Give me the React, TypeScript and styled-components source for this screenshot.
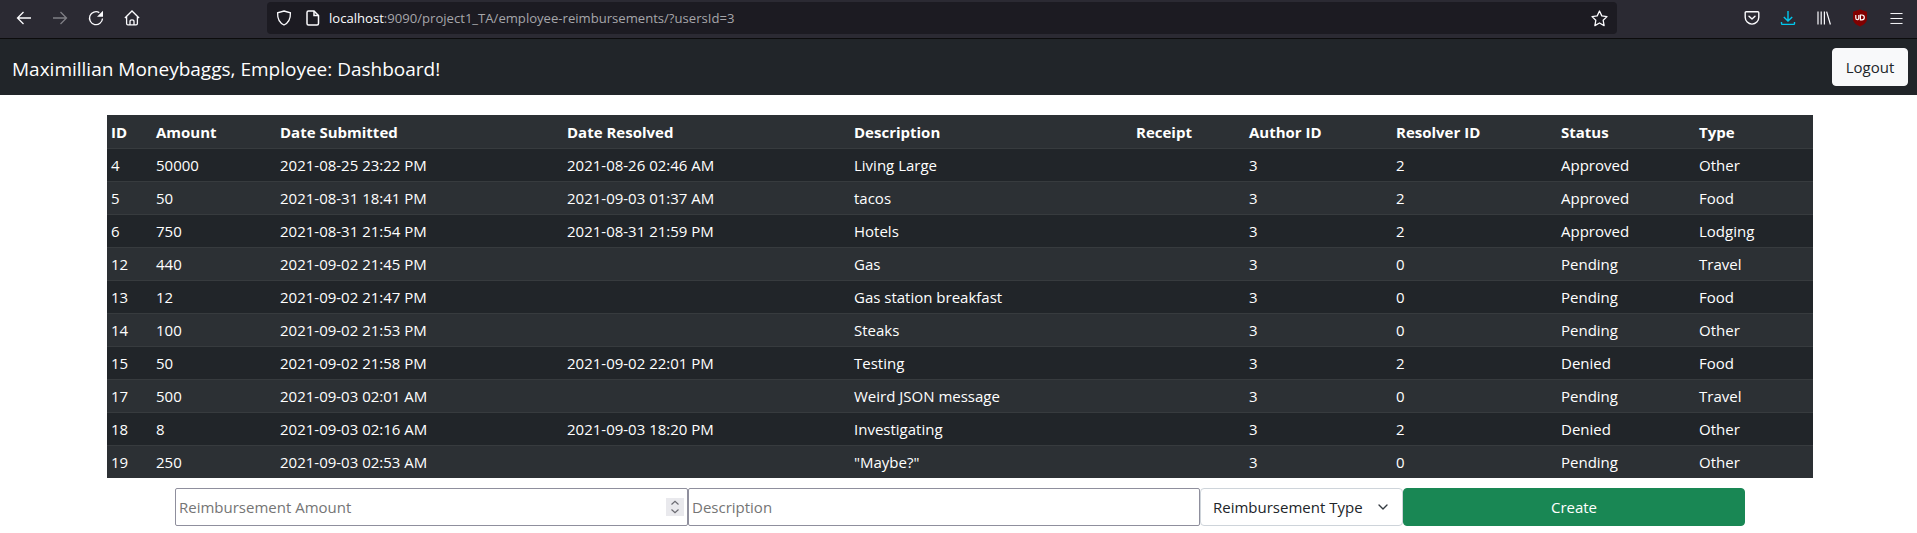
import React from 'react';
import styled, { createGlobalStyle } from 'styled-components';
import { ChevronDown, Menu } from 'lucide-react';

const FONT = `"Open Sans", "Noto Sans", "Liberation Sans", sans-serif`;

const GlobalStyle = createGlobalStyle`
 html, body {
  margin: 0;
  padding: 0;
  background: white;
  font-family: ${FONT};
 }
 * { box-sizing: border-box; }
`;

const columns = [
 { label: 'ID', width: 45 },
 { label: 'Amount', width: 124 },
 { label: 'Date Submitted', width: 287 },
 { label: 'Date Resolved', width: 287 },
 { label: 'Description', width: 282 },
 { label: 'Receipt', width: 113 },
 { label: 'Author ID', width: 147 },
 { label: 'Resolver ID', width: 165 },
 { label: 'Status', width: 138 },
 { label: 'Type', width: 118 },
];

const rows = [
 ['4', '50000', '2021-08-25 23:22 PM', '2021-08-26 02:46 AM', 'Living Large', '', '3', '2', 'Approved', 'Other'],
 ['5', '50', '2021-08-31 18:41 PM', '2021-09-03 01:37 AM', 'tacos', '', '3', '2', 'Approved', 'Food'],
 ['6', '750', '2021-08-31 21:54 PM', '2021-08-31 21:59 PM', 'Hotels', '', '3', '2', 'Approved', 'Lodging'],
 ['12', '440', '2021-09-02 21:45 PM', '', 'Gas', '', '3', '0', 'Pending', 'Travel'],
 ['13', '12', '2021-09-02 21:47 PM', '', 'Gas station breakfast', '', '3', '0', 'Pending', 'Food'],
 ['14', '100', '2021-09-02 21:53 PM', '', 'Steaks', '', '3', '0', 'Pending', 'Other'],
 ['15', '50', '2021-09-02 21:58 PM', '2021-09-02 22:01 PM', 'Testing', '', '3', '2', 'Denied', 'Food'],
 ['17', '500', '2021-09-03 02:01 AM', '', 'Weird JSON message', '', '3', '0', 'Pending', 'Travel'],
 ['18', '8', '2021-09-03 02:16 AM', '2021-09-03 18:20 PM', 'Investigating', '', '3', '2', 'Denied', 'Other'],
 ['19', '250', '2021-09-03 02:53 AM', '', '"Maybe?"', '', '3', '0', 'Pending', 'Other'],
];

function App() {
 return (
  <>
   <GlobalStyle />
   <Toolbar>
    <NavIcons>
     <IconSlot>
      <svg width="16" height="16" viewBox="0 0 16 16" fill="none" stroke="currentColor" strokeWidth="1.3">
       <path d="M15 8H1.500M7.500 2L1.500 8l6 6" />
      </svg>
     </IconSlot>
     <IconSlot $dim>
      <svg width="16" height="16" viewBox="0 0 16 16" fill="none" stroke="currentColor" strokeWidth="1.3">
       <path d="M1 8h13.500M8.500 2l6 6-6 6" />
      </svg>
     </IconSlot>
     <IconSlot>
      <svg width="16" height="16" viewBox="0 0 16 16" fill="none">
       <path d="M14.500 8.500A6.500 6.500 0 1 1 11.300 2.600" stroke="currentColor" strokeWidth="1.3" />
       <path d="M15 .8v6h-6z" fill="currentColor" />
      </svg>
     </IconSlot>
     <IconSlot>
      <svg width="16" height="16" viewBox="0 0 16 16" fill="none" stroke="currentColor" strokeWidth="1.3">
       <path d="M.9 8L8 1l7.100 7M2.600 6.600v7c0 .8.500 1.300 1.300 1.300h8.200c.8 0 1.300-.5 1.300-1.300v-7" />
       <path d="M6 14.900v-3.400c0-1 .8-1.600 2-1.600s2 .6 2 1.600v3.400" />
      </svg>
     </IconSlot>
    </NavIcons>
    <UrlBar>
     <svg width="16" height="16" viewBox="0 0 16 16" fill="none" stroke="#fbfbfe" strokeWidth="1.3">
      <path d="M8 1l6.400 1.800c.2 5.400-1.200 9.800-6.400 12.200C2.800 12.600 1.400 8.200 1.600 2.800z" />
     </svg>
     <svg width="14" height="16" viewBox="0 0 14 16" fill="none" stroke="#fbfbfe" strokeWidth="1.5">
      <path d="M2.500 1h5.500l4.500 4.500v8c0 .9-.6 1.500-1.500 1.500H2.500c-.9 0-1.500-.6-1.500-1.500v-11c0-.9.600-1.500 1.500-1.500z" />
      <path d="M8 1v4.500h4.500" />
     </svg>
     <UrlText>localhost<UrlRest>:9090/project1_TA/employee-reimbursements/?usersId=3</UrlRest></UrlText>
     <StarSlot>
      <svg width="17" height="17" viewBox="0 0 17 17" fill="none" stroke="#fbfbfe" strokeWidth="1.3" strokeLinejoin="round">
       <path d="M8.500 1l2.300 4.900 5.200.7-3.800 3.700.9 5.300-4.600-2.600-4.600 2.600.9-5.300L1 6.600l5.200-.7z" />
      </svg>
     </StarSlot>
    </UrlBar>
    <AddonIcons>
     <svg width="16" height="16" viewBox="0 0 16 16" fill="none" stroke="#fbfbfe" strokeWidth="1.4">
      <path d="M2.200 1.700h11.600c.6 0 1 .4 1 1v4.600a6.800 6.800 0 0 1-13.600 0V2.700c0-.6.4-1 1-1z" />
      <path d="M5 6.200l3 2.800 3-2.800" strokeLinecap="round" strokeLinejoin="round" />
     </svg>
     <svg width="16" height="16" viewBox="0 0 16 16" fill="none" stroke="#00c8ee" strokeWidth="1.4">
      <path d="M8 1v10M3.800 7L8 11l4.200-4" />
      <path d="M1.500 12v1.600c0 .5.3.8.8.8h11.400c.5 0 .8-.3.8-.8V12" />
     </svg>
     <svg width="16" height="16" viewBox="0 0 16 16" fill="none" stroke="#fbfbfe" strokeWidth="1.2">
      <path d="M2 1.500v13M5.200 1.500v13M8.400 1.500v13M10.600 1.600l3.800 12.900" />
     </svg>
     <svg width="16" height="18" viewBox="0 0 16 18">
      <path d="M8 .5l7 2.200v7.400c0 3.600-3.600 6-7 7.400-3.400-1.400-7-3.800-7-7.400V2.700z" fill="#800000" />
      <path d="M3.800 6v3c0 2.300 3 2.300 3 0V6M8.400 6v4.800h1.500c3.200 0 3.200-4.800 0-4.800z" fill="none" stroke="#fff" strokeWidth="1.2" />
     </svg>
     <Menu size={17} strokeWidth={1.4} />
    </AddonIcons>
   </Toolbar>
   <Navbar>
    <Brand>Maximillian Moneybaggs, Employee: Dashboard!</Brand>
    <LogoutButton>Logout</LogoutButton>
   </Navbar>
   <Main>
    <Table>
     <thead>
      <tr>
       {columns.map((col) => (
        <HeadCell key={col.label} $width={col.width}>{col.label}</HeadCell>
       ))}
      </tr>
     </thead>
     <tbody>
      {rows.map((row, i) => (
       <BodyRow key={row[0]} $striped={i % 2 === 1}>
        {row.map((value, j) => (
         <BodyCell key={j}>{value}</BodyCell>
        ))}
       </BodyRow>
      ))}
     </tbody>
    </Table>
    <CreateForm>
     <AmountWrap>
      <AmountInput type="number" placeholder="Reimbursement Amount" />
      <Spinner>
       <svg width="10" height="14" viewBox="0 0 10 14" fill="none" stroke="#6b6b72" strokeWidth="1.2">
        <path d="M1.500 4.500L5 1.200l3.500 3.300M1.500 9.500L5 12.800l3.500-3.300" />
       </svg>
      </Spinner>
     </AmountWrap>
     <DescriptionInput type="text" placeholder="Description" />
     <SelectWrap>
      <TypeSelect defaultValue="">
       <option value="">Reimbursement Type</option>
      </TypeSelect>
      <SelectArrow><ChevronDown size={16} strokeWidth={2} /></SelectArrow>
     </SelectWrap>
     <CreateButton type="button">Create</CreateButton>
    </CreateForm>
   </Main>
  </>
 );
}

export default App;

/* Styled Components */

const Toolbar = styled.div`
 display: flex;
 align-items: center;
 height: 39px;
 background-color: #2b2a33;
 border-bottom: 1px solid #0c0c0d;
 color: #fbfbfe;
 padding-bottom: 2px;
`;

const NavIcons = styled.div`
 display: flex;
 align-items: center;
 width: 267px;
 padding-left: 15px;
 gap: 19px;
`;

const IconSlot = styled.span<{ $dim?: boolean }>`
 display: flex;
 width: 17px;
 justify-content: center;
 opacity: ${(props) => (props.$dim ? 0.4 : 1)};
`;

const UrlBar = styled.div`
 display: flex;
 align-items: center;
 width: 1350px;
 height: 32px;
 padding: 0 9px;
 background-color: #1c1b22;
 border-radius: 4px;

 > svg:first-child {
  margin-right: 14px;
 }
`;

const UrlText = styled.span`
 margin-left: 9px;
 font-size: 13.1px;
 color: #fbfbfe;
`;

const UrlRest = styled.span`
 color: #a6a6aa;
`;

const StarSlot = styled.span`
 display: flex;
 margin-left: auto;
`;

const AddonIcons = styled.div`
 display: flex;
 align-items: center;
 gap: 20px;
 padding-left: 127px;
`;

const Navbar = styled.div`
 display: flex;
 align-items: center;
 justify-content: space-between;
 height: 56px;
 padding: 0 9px 0 12px;
 background-color: #212529;
`;

const Brand = styled.span`
 padding-top: 3px;
 font-size: 19px;
 color: white;
`;

const LogoutButton = styled.button`
 width: 76px;
 height: 38px;
 padding: 0;
 font-family: ${FONT};
 font-size: 15px;
 color: #212529;
 background-color: #f8f9fa;
 border: 1px solid #f8f9fa;
 border-radius: 4px;
`;

const Main = styled.div`
 padding: 20px 104px 0 107px;
`;

const Table = styled.table`
 width: 1706px;
 table-layout: fixed;
 border-collapse: collapse;
 color: white;
 font-size: 15px;
`;

const HeadCell = styled.th<{ $width: number }>`
 width: ${(props) => props.$width}px;
 height: 33px;
 padding: 1px 4px 0;
 text-align: left;
 font-weight: 700;
 background-color: #2c3034;
 border-bottom: 1px solid #373b3e;
`;

const BodyRow = styled.tr<{ $striped: boolean }>`
 height: 33px;
 background-color: ${(props) => (props.$striped ? '#2c3034' : '#212529')};
 border-bottom: 1px solid #373b3e;

 &:last-child {
  border-bottom: none;
 }
`;

const BodyCell = styled.td`
 padding: 0 4px;
 white-space: nowrap;
`;

const CreateForm = styled.form`
 display: flex;
 height: 38px;
 margin: 10px 0 0 68px;
 width: 1570px;
`;

const AmountWrap = styled.div`
 position: relative;
 width: 513px;
`;

const AmountInput = styled.input`
 width: 100%;
 height: 38px;
 padding: 1px 3px;
 font-family: ${FONT};
 font-size: 15px;
 border: 1px solid #8f8f9d;
 border-radius: 2px;
 appearance: textfield;

 &::placeholder {
  color: #757575;
 }
 &::-webkit-inner-spin-button {
  display: none;
 }
`;

const Spinner = styled.span`
 position: absolute;
 top: 10px;
 right: 4px;
 display: flex;
 align-items: center;
 justify-content: center;
 width: 18px;
 height: 18px;
 background-color: #e9e9ed;
 pointer-events: none;
`;

const DescriptionInput = styled(AmountInput)`
 width: 512px;
`;

const SelectWrap = styled.div`
 position: relative;
 width: 203px;
`;

const TypeSelect = styled.select`
 appearance: none;
 width: 100%;
 height: 38px;
 padding: 0 36px 0 12px;
 font-family: ${FONT};
 font-size: 15px;
 color: #212529;
 background-color: white;
 border: 1px solid #ced4da;
 border-radius: 4px;
`;

const SelectArrow = styled.span`
 position: absolute;
 top: 11px;
 right: 12px;
 display: flex;
 color: #343a40;
 pointer-events: none;
`;

const CreateButton = styled.button`
 width: 342px;
 height: 38px;
 font-family: ${FONT};
 font-size: 15px;
 color: white;
 background-color: #198754;
 border: 1px solid #198754;
 border-radius: 4px;
`;
